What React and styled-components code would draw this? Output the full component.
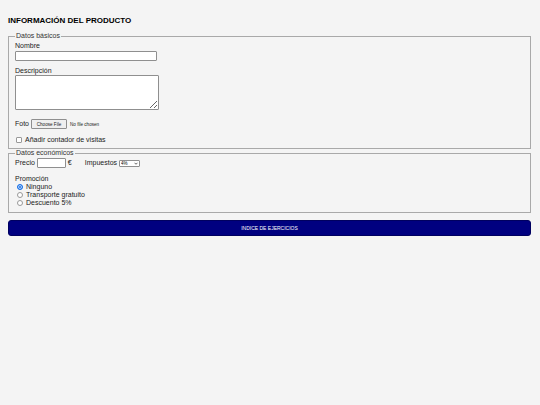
import React from 'react'
import styled, { createGlobalStyle } from 'styled-components';

const GlobalStyle = createGlobalStyle`
html, body {
  background: #f4f4f4;
}
body {
  margin: 0;
  font-family: "Liberation Sans", Arial, sans-serif;
  color: #222;
  -webkit-font-smoothing: antialiased;
}
`;

const App = () => {
    return (
        <>
            <GlobalStyle />
            <Page>
                <Title>INFORMACIÓN DEL PRODUCTO</Title>
                <Fieldset $pad="2px 6px 4px">
                    <Legend>Datos básicos</Legend>
                    <Label>Nombre</Label>
                    <TextInput type="text" $w={142} $h={10} style={{ marginTop: 1 }} />
                    <Label style={{ marginTop: 6 }}>Descripción</Label>
                    <TextArea />
                    <Row style={{ marginTop: 9, height: 10 }}>
                        <Text>Foto</Text>
                        <FileButton type="button">Choose File</FileButton>
                        <Small>No file chosen</Small>
                    </Row>
                    <Row style={{ marginTop: 7, height: 8 }}>
                        <Check type="checkbox" />
                        <Text>Añadir contador de visitas</Text>
                    </Row>
                </Fieldset>
                <Fieldset $pad="1px 6px 5px">
                    <Legend>Datos económicos</Legend>
                    <Row style={{ height: 10 }}>
                        <Text>Precio</Text>
                        <TextInput type="text" $w={29} $h={10} style={{ marginLeft: 2 }} />
                        <Text style={{ marginLeft: 2 }}>€</Text>
                        <Text style={{ marginLeft: 13 }}>Impuestos</Text>
                        <SelectWrap>
                            <Select defaultValue="4">
                                <option value="4">4%</option>
                                <option value="10">10%</option>
                                <option value="21">21%</option>
                            </Select>
                            <Chevron viewBox="0 0 8 5">
                                <path d="M1 1 L4 4 L7 1" fill="none" stroke="#222" strokeWidth="1.4" />
                            </Chevron>
                        </SelectWrap>
                    </Row>
                    <Label style={{ marginTop: 7 }}>Promoción</Label>
                    <Radios>
                        <Row style={{ height: 8 }}>
                            <Radio type="radio" name="promo" defaultChecked />
                            <Text>Ninguno</Text>
                        </Row>
                        <Row style={{ height: 8 }}>
                            <Radio type="radio" name="promo" />
                            <Text>Transporte gratuito</Text>
                        </Row>
                        <Row style={{ height: 8 }}>
                            <Radio type="radio" name="promo" />
                            <Text>Descuento 5%</Text>
                        </Row>
                    </Radios>
                </Fieldset>
                <IndexButton type="button">INDICE DE EJERCICIOS</IndexButton>
            </Page>
        </>
    )
}

export default App;

const Page = styled.div`
padding: 16px 9px 8px 8px;
display: flex;
flex-direction: column;
`;

const Title = styled.h1`
margin: 0 0 7px;
font-size: 8px;
line-height: 9px;
font-weight: bold;
color: #000;
`;

const Fieldset = styled.fieldset`
margin: 0;
padding: ${(p) => p.$pad};
border: 1px solid #a9a9a9;
display: flex;
flex-direction: column;
align-items: flex-start;
min-width: 0;
`;

const Legend = styled.legend`
padding: 0 1px;
font-size: 7px;
line-height: 8px;
color: #333;
`;

const Label = styled.div`
font-size: 7px;
line-height: 8px;
`;

const Text = styled.span`
font-size: 7px;
line-height: 8px;
white-space: nowrap;
`;

const Small = styled.span`
font-size: 4.6px;
margin-left: 3px;
white-space: nowrap;
`;

const Row = styled.div`
display: flex;
align-items: center;
`;

const TextInput = styled.input`
box-sizing: border-box;
width: ${(p) => p.$w}px;
height: ${(p) => p.$h}px;
margin: 0;
padding: 0 2px;
border: 1px solid #8f8f8f;
border-radius: 1px;
background: #fff;
font-size: 6px;
`;

const TextArea = styled.textarea`
box-sizing: border-box;
width: 144px;
height: 35px;
margin: 0;
padding: 1px;
border: 1px solid #8f8f8f;
border-radius: 1px;
background: #fff;
font-size: 6px;
resize: both;
`;

const FileButton = styled.button`
box-sizing: border-box;
height: 10px;
width: 36px;
margin: 0 0 0 2px;
padding: 0;
border: 1px solid #8f8f8f;
border-radius: 1px;
background: #efefef;
font-family: inherit;
font-size: 4.6px;
color: #222;
`;

const Check = styled.input`
appearance: none;
box-sizing: border-box;
width: 6px;
height: 6px;
margin: 0 3px 0 1px;
border: 1px solid #999;
border-radius: 1px;
background: #fff;
`;

const Radio = styled.input`
appearance: none;
box-sizing: border-box;
width: 6px;
height: 6px;
margin: 0 3px 0 2px;
border: 1px solid #999;
border-radius: 50%;
background: #fff;
&:checked {
  border-color: #1a73e8;
  background: #1a73e8;
  box-shadow: inset 0 0 0 1px #cfe0fb;
}
`;

const Radios = styled.div`
display: flex;
flex-direction: column;
`;

const SelectWrap = styled.span`
position: relative;
display: inline-flex;
margin-left: 2px;
`;

const Select = styled.select`
appearance: none;
box-sizing: border-box;
width: 21px;
height: 7px;
margin: 0;
padding: 0 0 0 1px;
border: 1px solid #8f8f8f;
border-radius: 1px;
background: #fff;
font-family: inherit;
font-size: 4.5px;
line-height: 5px;
color: #000;
`;

const Chevron = styled.svg`
position: absolute;
right: 2px;
top: 2px;
width: 4px;
height: 3px;
pointer-events: none;
`;

const IndexButton = styled.button`
margin-top: 7px;
height: 16px;
border: 1px solid #000060;
border-radius: 3px;
background: #000080;
color: #fff;
font-family: inherit;
font-size: 5px;
cursor: pointer;
`;
